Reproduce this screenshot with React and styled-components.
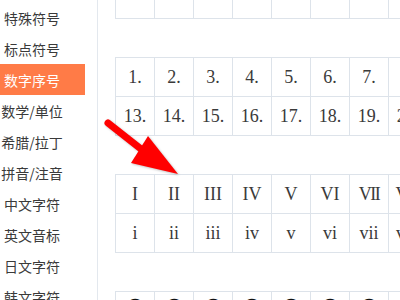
import React from "react";
import styled, { createGlobalStyle } from "styled-components";

const GlobalStyle = createGlobalStyle`
    html, body {
        margin: 0;
        padding: 0;
        background: #ffffff;
    }
`;

const Page = styled.div`
    position: relative;
    display: flex;
    width: 400px;
    height: 300px;
    overflow: hidden;
    background: #ffffff;
    font-family: "Noto Sans CJK SC", "Noto Sans", sans-serif;
`;

const Sidebar = styled.ul`
    list-style: none;
    margin: 0;
    padding: 2px 0 0 0;
    width: 97px;
    flex-shrink: 0;
    border-right: 1px solid #e3e8ee;
`;

const NavItem = styled.li`
    width: 85px;
    height: 31px;
    padding-right: 21px;
    box-sizing: border-box;
    display: flex;
    align-items: center;
    justify-content: center;
    font-size: 14px;
    white-space: nowrap;
    color: ${(p) => (p.$active ? "#ffffff" : "#3a3a3a")};
    background: ${(p) => (p.$active ? "#ff7b47" : "transparent")};
`;

const Content = styled.div`
    display: flex;
    flex-direction: column;
    gap: 38px;
    margin-top: -60px;
    padding-left: 17px;
    overflow: hidden;
`;

const Grid = styled.div`
    display: grid;
    grid-template-columns: repeat(12, 39px);
    grid-auto-rows: 39px;
    border-top: 1px solid #dde3ea;
    border-left: 1px solid #dde3ea;
    width: max-content;
`;

const Cell = styled.div`
    display: flex;
    align-items: center;
    justify-content: center;
    border-right: 1px solid #dde3ea;
    border-bottom: 1px solid #dde3ea;
    font-family: "Liberation Serif", "DejaVu Serif", serif;
    font-size: 18px;
    letter-spacing: ${(p) => (p.$tight ? "-1.5px" : "0")};
    color: #3a3a3a;
`;

const CircleCell = styled(Cell)`
    align-items: flex-start;
    padding-top: 3px;
    font-family: "DejaVu Sans", sans-serif;
    font-size: 22px;
    line-height: 1.15;
    color: #111111;
`;

const Arrow = styled.svg`
    position: absolute;
    left: 0;
    top: 0;
    pointer-events: none;
    filter: drop-shadow(1px 1px 1px rgba(0, 0, 0, 0.25));
`;

const navItems = ["特殊符号", "标点符号", "数字序号", "数学/单位", "希腊/拉丁", "拼音/注音", "中文字符", "英文音标", "日文字符", "韩文字符"];

const range = (a, b) => Array.from({ length: b - a + 1 }, (_, i) => a + i);

const upperRoman = ["I", "II", "III", "IV", "V", "VI", "VII", "VIII", "IX", "X", "XI", "XII"];
const lowerRoman = ["i", "ii", "iii", "iv", "v", "vi", "vii", "viii", "ix", "x", "xi", "xii"];
const blackCircles = ["❶", "❷", "❸", "❹", "❺", "❻", "❼", "❽", "❾", "❿", "⓫", "⓬"];
const tight = ["VII", "VIII", "XII"];

export default function App() {
    return (
        <>
            <GlobalStyle />
            <Page>
                <Sidebar>
                    {navItems.map((n) => (
                        <NavItem key={n} $active={n === "数字序号"}>{n}</NavItem>
                    ))}
                </Sidebar>
                <Content>
                    <Grid>
                        {range(1, 24).map((i) => <Cell key={i} />)}
                    </Grid>
                    <Grid>
                        {range(1, 24).map((i) => <Cell key={i}>{i}.</Cell>)}
                    </Grid>
                    <Grid>
                        {upperRoman.map((r) => <Cell key={r} $tight={tight.includes(r)}>{r}</Cell>)}
                        {lowerRoman.map((r) => <Cell key={r}>{r}</Cell>)}
                    </Grid>
                    <Grid>
                        {blackCircles.map((c) => <CircleCell key={c}>{c}</CircleCell>)}
                    </Grid>
                </Content>
                <Arrow width="400" height="300" viewBox="0 0 400 300">
                    <line x1="108" y1="123" x2="141" y2="149" stroke="#ff0000" strokeWidth="7" strokeLinecap="round" />
                    <polygon points="148,136 131,163 178,174" fill="#ff0000" />
                </Arrow>
            </Page>
        </>
    );
}
